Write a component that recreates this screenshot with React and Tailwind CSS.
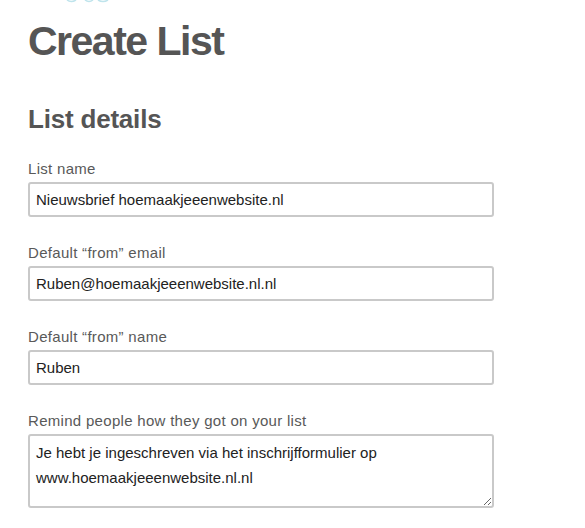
import React from "react";

const font = { fontFamily: '"Liberation Sans", Arial, sans-serif' };

function Field({ label, value }) {
  return (
    <div className="mt-[26px] first:mt-[24px]">
      <label className="block text-[15px] leading-[20px] text-[#595959] tracking-[0.3px]">{label}</label>
      <input
        readOnly
        value={value}
        className="mt-[3px] block w-[466px] h-[35px] border-2 border-[#c9c9c9] rounded-[3px] px-[6px] text-[15px] text-[#222] bg-white outline-none"
      />
    </div>
  );
}

export default function App() {
  return (
    <div className="w-[585px] h-[528px] bg-white overflow-hidden" style={font}>
      <svg className="block ml-[66px]" width="46" height="3" viewBox="0 0 46 3">
        <path d="M1 0 Q5 3 10 0" stroke="#bfe4ec" strokeWidth="1.5" fill="none" />
        <path d="M19 0 Q23 3 27 0" stroke="#bfe4ec" strokeWidth="1.5" fill="none" />
        <path d="M32 0 Q37 3 42 0" stroke="#bfe4ec" strokeWidth="1.5" fill="none" />
      </svg>
      <div className="pl-[28px]">
        <h1 className="mt-[14px] text-[41px] leading-[48px] font-bold text-[#555] tracking-[-1.5px]">
          Create List
        </h1>
        <h2 className="mt-[38px] text-[26px] leading-[32px] font-bold text-[#555] tracking-[-0.2px]">
          List details
        </h2>
        <div className="flex flex-col">
          <Field label="List name" value="Nieuwsbrief hoemaakjeeenwebsite.nl" />
          <Field label="Default “from” email" value="Ruben@hoemaakjeeenwebsite.nl.nl" />
          <Field label="Default “from” name" value="Ruben" />
          <div className="mt-[26px]">
            <label className="block text-[15px] leading-[20px] text-[#595959] tracking-[0.3px]">
              Remind people how they got on your list
            </label>
            <textarea
              readOnly
              value={"Je hebt je ingeschreven via het inschrijfformulier op www.hoemaakjeeenwebsite.nl.nl"}
              className="mt-[3px] block w-[466px] h-[74px] border-2 border-[#c9c9c9] rounded-[3px] px-[6px] pt-[4px] text-[15px] leading-[25px] text-[#222] bg-white outline-none resize"
              style={font}
            />
          </div>
        </div>
      </div>
    </div>
  );
}
